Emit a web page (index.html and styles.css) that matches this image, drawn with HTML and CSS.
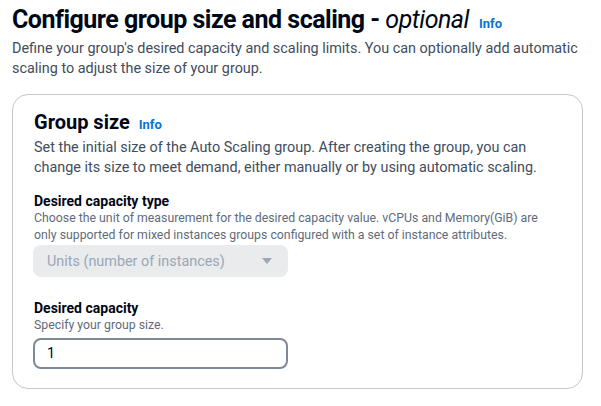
FILE: index.html
```html
<!DOCTYPE html>
<html>
<head>
<meta charset="utf-8">
<link rel="stylesheet" href="styles.css">
</head>
<body>
<div class="page">
  <h1 class="title">Configure group size and scaling - <em>optional</em><a class="info info-lg">Info</a></h1>
  <p class="lead">Define your group's desired capacity and scaling limits. You can optionally add automatic scaling to adjust the size of your group.</p>
  <section class="card">
    <h2 class="card-title">Group size<a class="info">Info</a></h2>
    <p class="card-desc">Set the initial size of the Auto Scaling group. After creating the group, you can change its size to meet demand, either manually or by using automatic scaling.</p>
    <div class="field">
      <div class="label">Desired capacity type</div>
      <div class="hint">Choose the unit of measurement for the desired capacity value. vCPUs and Memory(GiB) are only supported for mixed instances groups configured with a set of instance attributes.</div>
      <div class="select">
        <span>Units (number of instances)</span>
        <svg class="caret" width="10" height="6" viewBox="0 0 10 6"><path d="M0 0 L10 0 L5 6 Z" fill="#9ba7b6"/></svg>
      </div>
    </div>
    <div class="field field-2">
      <div class="label">Desired capacity</div>
      <div class="hint">Specify your group size.</div>
      <div class="input">1</div>
    </div>
  </section>
</div>
</body>
</html>
```
FILE: styles.css
```css
* { box-sizing: border-box; }
body {
  margin: 0;
  background: #ffffff;
  font-family: Roboto, "Liberation Sans", sans-serif;
  color: #000716;
}
.page {
  padding: 4px 12px 0 12px;
  width: 601px;
}
.title {
  margin: 0;
  font-size: 25px;
  line-height: 32px;
  font-weight: 700;
  letter-spacing: -0.5px;
  white-space: nowrap;
}
.title em {
  font-style: italic;
  font-weight: 400;
}
.info {
  color: #0972d3;
  font-size: 13px;
  line-height: 1;
  font-weight: 700;
  font-style: normal;
  letter-spacing: 0;
  margin-left: 9px;
}
.info-lg { margin-left: 10px; }
.lead {
  margin: 3px 0 0 0;
  font-size: 14.4px;
  line-height: 20px;
  color: #414d5c;
}
.card {
  margin-top: 15px;
  width: 571px;
  border: 1px solid #c6c6cd;
  border-radius: 16px;
  padding: 15px 20px 19px 21px;
}
.card-title {
  margin: 0;
  font-size: 20px;
  line-height: 24px;
  font-weight: 700;
}
.card-desc {
  margin: 4px 0 0 0;
  font-size: 14.4px;
  line-height: 20px;
  color: #414d5c;
}
.field { margin-top: 14px; }
.field-2 { margin-top: 22px; }
.label {
  font-size: 14px;
  font-weight: 700;
  line-height: 18px;
}
.hint {
  font-size: 12.3px;
  line-height: 17px;
  color: #5f6b7a;
}
.select {
  margin: 1px 0 0 -1px;
  width: 255px;
  height: 32px;
  background: #e9ebed;
  border-radius: 8px;
  display: flex;
  align-items: center;
  justify-content: space-between;
  padding: 0 16px 0 14px;
  font-size: 14.4px;
  color: #9ba7b6;
}
.caret { display: block; }
.input {
  margin: 4px 0 0 -1px;
  width: 255px;
  height: 31px;
  border: 2px solid #7d8998;
  border-radius: 8px;
  display: flex;
  align-items: center;
  padding: 0 12px;
  font-size: 14.4px;
  color: #000716;
}
```
